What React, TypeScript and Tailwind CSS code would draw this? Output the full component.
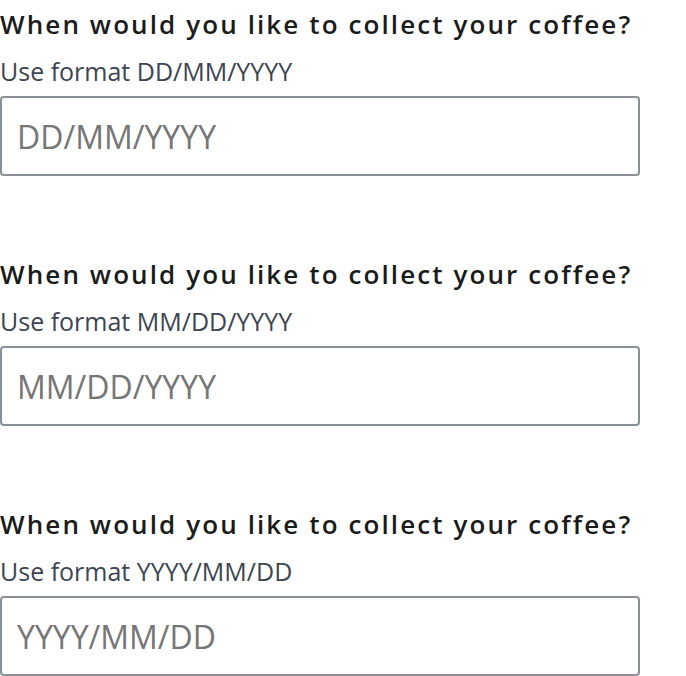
import React from 'react';

const formats = ['DD/MM/YYYY', 'MM/DD/YYYY', 'YYYY/MM/DD'];

const App: React.FC = () => {
  return (
    <div className="font-['Open_Sans',sans-serif] bg-white min-h-screen pt-[6px]">
      {formats.map((fmt, i) => (
        <div key={fmt} className={i > 0 ? 'mt-[80px]' : ''}>
          <label htmlFor={`date-${i}`} className="block text-[26px] leading-[36px] font-semibold tracking-[2.1px] text-[#1b1b1b] whitespace-nowrap">
            When would you like to collect your coffee?
          </label>
          <div className="mt-[14px] text-[25px] leading-[30px] text-[#3d4551]">Use format {fmt}</div>
          <input
            id={`date-${i}`}
            type="text"
            placeholder={fmt}
            className="mt-[10px] block w-[640px] h-[80px] border-2 border-[#8a9099] rounded-[4px] px-[15px] text-[32px] text-[#1b1b1b] placeholder:text-[#767676] outline-none"
          />
        </div>
      ))}
    </div>
  );
};

export default App;
